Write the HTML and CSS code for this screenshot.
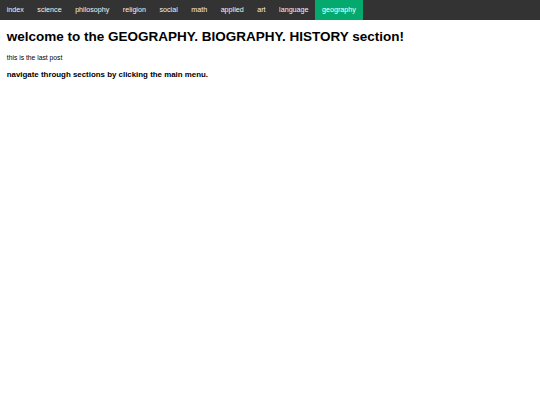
FILE: index.html
```html
<!DOCTYPE html>
<html>
<head>
<meta charset="utf-8">
<link rel="stylesheet" href="styles.css">
</head>
<body>
<nav class="topnav">
  <a href="#">index</a>
  <a href="#">science</a>
  <a href="#">philosophy</a>
  <a href="#">religion</a>
  <a href="#">social</a>
  <a href="#">math</a>
  <a href="#">applied</a>
  <a href="#">art</a>
  <a href="#">language</a>
  <a href="#" class="active">geography</a>
</nav>
<main class="content">
  <h1 class="title">welcome to the GEOGRAPHY. BIOGRAPHY. HISTORY section!</h1>
  <p class="note">this is the last post</p>
  <h3 class="hint">navigate through sections by clicking the main menu.</h3>
</main>
</body>
</html>
```

FILE: styles.css
```css
html, body {
  margin: 0;
  padding: 0;
  background: #fff;
  font-family: "Liberation Sans", Arial, sans-serif;
  color: #000;
}

.topnav {
  display: flex;
  background-color: #333;
  overflow: hidden;
}

.topnav a {
  display: block;
  color: #f2f2f2;
  text-decoration: none;
  font-size: 7.17px;
  line-height: 8.2px;
  padding: 5.9px 6.75px;
}

.topnav a.active {
  background-color: #04AA6D;
  color: #fff;
}

.content {
  padding-left: 6.75px;
}

.title {
  font-size: 13.5px;
  line-height: 15.5px;
  font-weight: bold;
  margin: 9.4px 0 9.05px;
}

.note {
  font-size: 6.75px;
  line-height: 7.76px;
  margin: 6.75px 0;
}

.hint {
  font-size: 7.9px;
  line-height: 9.1px;
  font-weight: bold;
  margin: 7.9px 0;
}
```
